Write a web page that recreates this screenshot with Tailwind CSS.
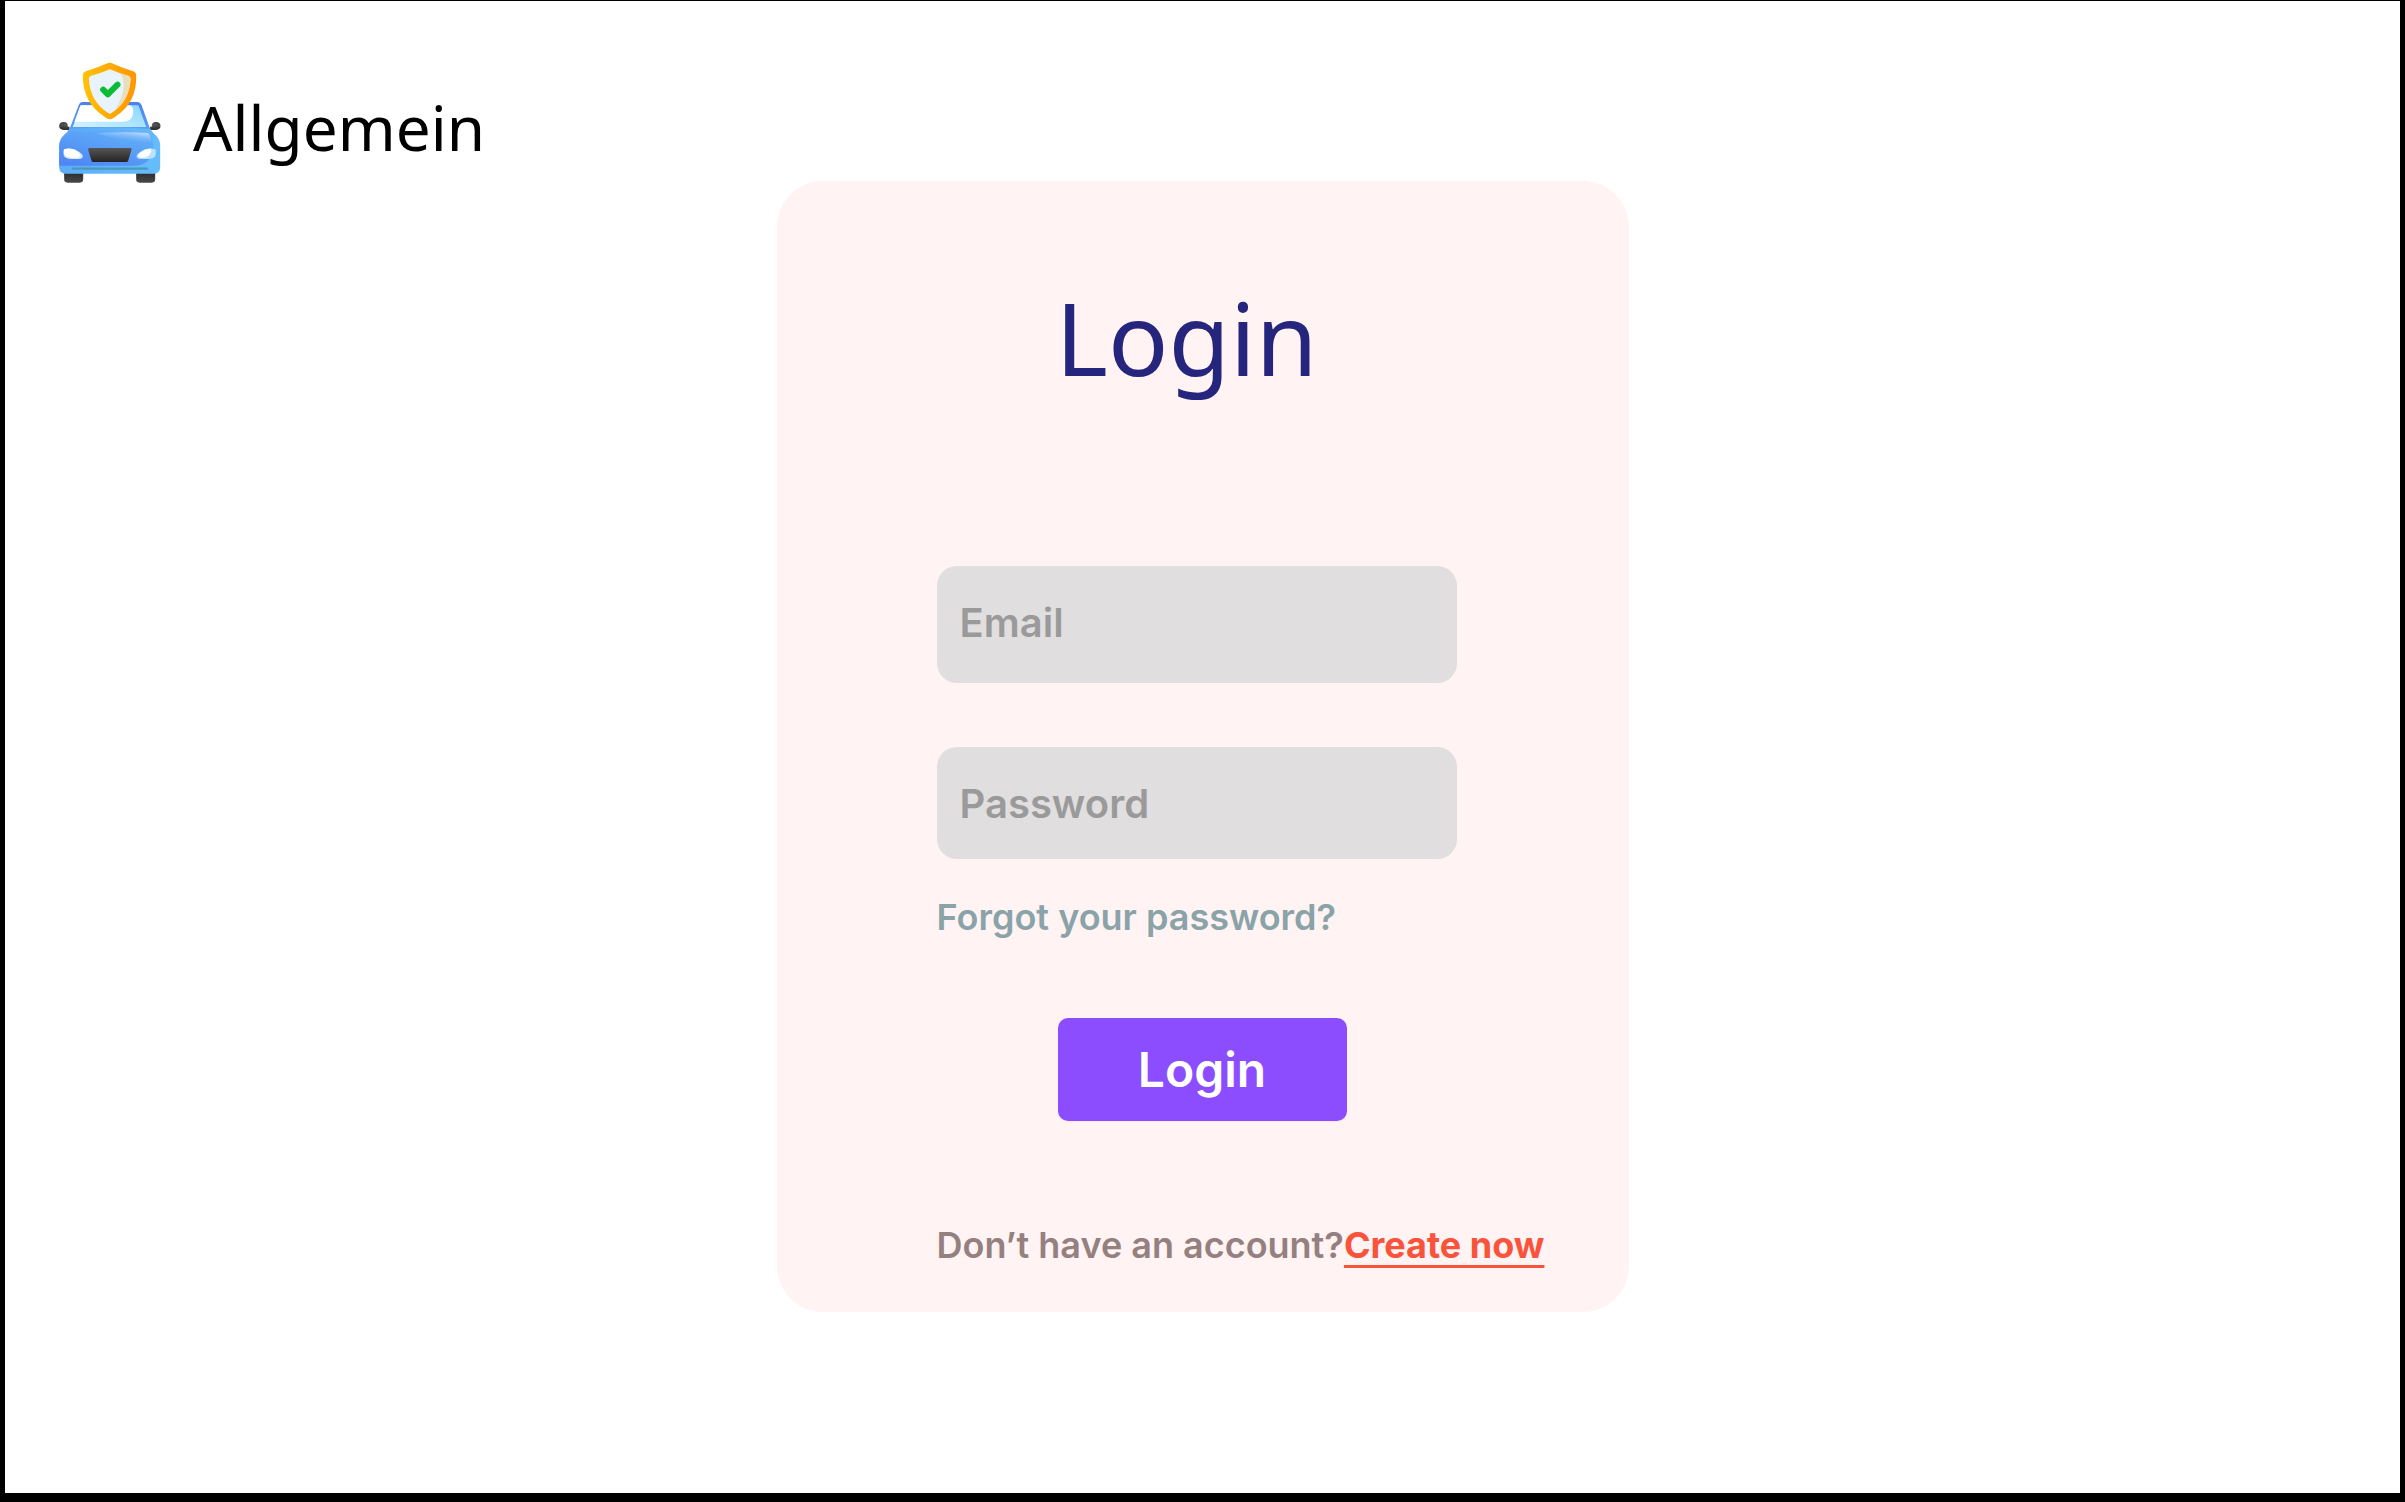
<!DOCTYPE html>
<html lang="en">
<head>
<meta charset="utf-8">
<meta name="viewport" content="width=device-width, initial-scale=1">
<title>Allgemein – Login</title>
<script src="https://cdn.jsdelivr.net/npm/@tailwindcss/browser@4"></script>
</head>
<body class="min-h-screen flex flex-col bg-white border-black border-x-[5px] border-t border-b-[9px] font-['Inter',sans-serif] font-semibold">
  <header class="flex items-center gap-8 pt-[61px] pl-[53px]">
    <svg class="w-[103px] h-[122px] shrink-0" viewBox="54 36 308 366" role="img" aria-label="Insured car">
      <defs>
        <linearGradient id="body" x1="0" y1="0" x2="1" y2="0.3"><stop offset="0" stop-color="#5ba6f7"/><stop offset="1" stop-color="#64bcfb"/></linearGradient>
        <linearGradient id="face" x1="0.9" y1="0" x2="0.2" y2="1"><stop offset="0" stop-color="#62b4f8"/><stop offset="1" stop-color="#4f86f5"/></linearGradient>
        <linearGradient id="shine" x1="1" y1="0" x2="0.4" y2="1"><stop offset="0" stop-color="#d6e8ff"/><stop offset="0.8" stop-color="#6aaaf8" stop-opacity="0.2"/><stop offset="1" stop-color="#5c9df7" stop-opacity="0"/></linearGradient>
        <linearGradient id="frame" x1="0" y1="0" x2="0" y2="1"><stop offset="0" stop-color="#4d7ff0"/><stop offset="1" stop-color="#5aa5f5"/></linearGradient>
        <linearGradient id="glass" x1="0" y1="1" x2="1" y2="0.2"><stop offset="0" stop-color="#d5f3ff"/><stop offset="1" stop-color="#90daff"/></linearGradient>
        <linearGradient id="gold" x1="0" y1="0" x2="1" y2="0"><stop offset="0" stop-color="#ffc107"/><stop offset="1" stop-color="#ff9500"/></linearGradient>
        <linearGradient id="dark" x1="0" y1="0" x2="0" y2="1"><stop offset="0" stop-color="#555"/><stop offset="1" stop-color="#242424"/></linearGradient>
        <linearGradient id="tyre" x1="0" y1="0" x2="0" y2="1"><stop offset="0" stop-color="#2b2b2b"/><stop offset="1" stop-color="#484848"/></linearGradient>
        <radialGradient id="mirror" cx="0.5" cy="0.35" r="0.6"><stop offset="0" stop-color="#aaa"/><stop offset="1" stop-color="#333"/></radialGradient>
      </defs>
      <path d="M72 366h57v22q0 10-10 10H82q-10 0-10-10zM288 366h57v22q0 10-10 10h-37q-10 0-10-10z" fill="url(#tyre)"/>
      <path d="M72 230h16v10H76zM346 230h-16v10h12z" fill="#333"/>
      <path d="M57 228q0-12 14-12 12 0 12 12v12H70q-13-2-13-12zM361 228q0-12-14-12-12 0-12 12v12h13q13-2 13-12z" fill="url(#mirror)"/>
      <path d="M128 156h162q10 0 14 9l26 72 3 12H84l4-12 28-72q3-9 12-9z" fill="url(#frame)"/>
      <path d="M124 166h168q3 0 4 3l22 62H98l22-62q1-3 4-3z" fill="url(#glass)"/>
      <path d="M124 166h146q9 5 9 18 0 31-32 31H103l17-46q1-3 4-3z" fill="#fff"/>
      <path d="M88 237q120-10 242 0 6 9 18 20 12 12 12 30v64q0 20-20 20H77q-20 0-20-20v-64q0-18 12-30 13-11 19-20z" fill="url(#body)"/>
      <path d="M91 246q118-4 236 0 10 12 12 38 0 63-60 63H57v-57q0-15 12-28 12-8 22-16z" fill="url(#face)"/>
      <path d="M170 249q80-4 154 0 8 8 10 24-15 8-50 3-60-7-114-27z" fill="url(#shine)"/>
      <path d="M72 298q25-8 44 7 12 8 12 14-1 8-12 8H92q-22-2-22-16-1-9 2-13z" fill="#d9e9ff"/>
      <path d="M73 297q22-6 40 8 9 8 7 12-2 6-12 6H94q-20-2-22-13-1-8 1-13z" fill="#fff"/>
      <path d="M345 298q-25-8-44 7-12 8-12 14 1 8 12 8h24q22-2 22-16 1-9-2-13z" fill="#b9e2ff"/>
      <path d="M334 296q-20 0-34 12-10 8-6 12 5 4 18 3 21-4 22-27z" fill="#fff"/>
      <path d="M148 294h122q5 0 4 5l-10 33q-1 4-6 4h-98q-5 0-6-4l-10-33q-1-5 4-5z" fill="url(#dark)"/>
      <path d="M98 356h222" stroke="#4a98bb" stroke-width="7" stroke-linecap="round"/>
      <path d="M202 40q7-3 14 0 25 12 63 24 9 3 9 12 3 83-65 126-14 12-28 0-68-43-67-126 0-9 9-12 38-12 65-24z" fill="url(#gold)"/>
      <path d="M205 59q4-2 8 0 25 11 51 18 7 2 7 9-2 67-57 103-5 4-10 0-55-36-58-103 0-7 7-9 27-7 52-18z" fill="#e9f3fc"/>
      <path d="M242 71l22 6q7 2 7 9-2 59-47 95 42-68 18-110z" fill="#e8deba"/>
      <path d="M189 119l14 14 29-29" fill="none" stroke="#0bbd35" stroke-width="18" stroke-linecap="round" stroke-linejoin="round"/>
    </svg>
    <span class="pt-2 font-['Noto_Sans',sans-serif] font-normal text-[62px] leading-[62px] text-black">Allgemein</span>
  </header>

  <main class="-mt-[3px] flex justify-center">
    <form class="w-full max-w-[852px] rounded-[46px] bg-[#fff3f3] pt-[106px] pb-[45px] pl-[160px]">
      <h1 class="pl-[119px] font-['Noto_Sans',sans-serif] font-normal text-[100px] leading-[100px] text-[#25257d]">Login</h1>
      <div class="mt-[179px] flex w-[520px] flex-col gap-16">
        <input type="email" aria-label="Email" placeholder="Email" class="h-[117px] w-full rounded-[20px] bg-[#e0dedf] px-[23px] pb-1 text-[40px] text-gray-700 outline-none placeholder:text-[#9b9a9b]">
        <input type="password" aria-label="Password" placeholder="Password" class="h-[112px] w-full rounded-[20px] bg-[#e0dedf] px-[23px] text-[40px] text-gray-700 outline-none placeholder:text-[#9b9a9b]">
      </div>
      <a href="#" class="mt-9 block w-fit text-[36px] leading-[44px] text-[#8aa3a8]">Forgot your password?</a>
      <button type="submit" class="mt-[79px] ml-[121px] block h-[103px] w-[289px] rounded-[10px] bg-[#8b4dff] text-[48px] text-white shadow-xs">Login</button>
      <p class="mt-[102px] whitespace-nowrap text-[36px] leading-[44px] text-[#958080]">Don’t have an account?<a href="#" class="font-bold text-[#f9533c] underline decoration-[3px] underline-offset-[7px]">Create now</a></p>
    </form>
  </main>
</body>
</html>
